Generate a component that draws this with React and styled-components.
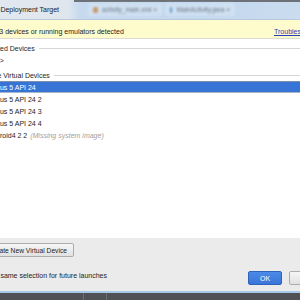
import styled, { createGlobalStyle } from "styled-components";

const Global = createGlobalStyle`
  html, body { margin: 0; padding: 0; }
  body {
    font-family: "Liberation Sans", Arial, sans-serif;
    font-size: 7px;
    color: #1e1e1e;
  }
`;

const Screen = styled.div`
  width: 300px;
  height: 300px;
  overflow: hidden;
  display: flex;
  flex-direction: column;
  background: #fff;
`;

const TitleBar = styled.div`
  height: 20px;
  display: flex;
  align-items: center;
  background: linear-gradient(to right, #e2e8ef 0, #dfe6ee 68px, #c6d9ee 80px, #c2d7ee 200px, #cadcef 300px);
  border-bottom: 1px solid #b9c9da;
  box-sizing: border-box;
  position: relative;
  white-space: nowrap;
`;

const TopShade = styled.div`
  position: absolute;
  left: 74px;
  right: 0;
  top: 0;
  height: 2px;
  background: #6d7278;
`;

const Title = styled.span`
  margin-left: ${(p) => p.$shift}px;
  width: 80px;
  flex: none;
  color: #1b1b1b;
`;

const Tabs = styled.div`
  display: flex;
  gap: 3px;
  margin-left: 29px;
  filter: blur(1.1px);
  opacity: 0.8;
`;

const Tab = styled.div`
  display: flex;
  align-items: center;
  gap: 4px;
  padding: 3px 5px;
  width: ${(p) => p.$w}px;
  box-sizing: border-box;
  border-radius: 2px;
  background: #d3e3f3;
  color: #56606c;
  font-size: 6.5px;
`;

const TabIcon = styled.span`
  width: 6px;
  height: 6px;
  border-radius: 2px;
  background: ${(p) => p.$c};
`;

const Warning = styled.div`
  height: 19px;
  display: flex;
  align-items: center;
  justify-content: space-between;
  background: #fefbcc;
  border-bottom: 1px solid #dcdcd0;
  box-sizing: border-box;
  white-space: nowrap;
  overflow: hidden;
  padding-top: 5px;
`;

const Clip = styled.span`
  margin-left: ${(p) => p.$shift}px;
  white-space: nowrap;
`;

const Link = styled.a`
  color: #2a3fb8;
  text-decoration: underline;
  margin-right: -20px;
  width: 46px;
`;

const List = styled.div`
  flex: 1;
  padding-top: 3px;
  display: flex;
  flex-direction: column;
`;

const GroupHeader = styled.div`
  height: 12px;
  display: flex;
  align-items: center;
  gap: 4px;
  margin-top: ${(p) => p.$top || 0}px;
  white-space: nowrap;
  &::after {
    content: "";
    flex: 1;
    height: 1px;
    background: #d6d6d6;
  }
`;

const Row = styled.div`
  height: 12px;
  display: flex;
  align-items: center;
  white-space: nowrap;
  box-sizing: border-box;
  background: ${(p) => (p.$selected ? "#3874d6" : "transparent")};
  color: ${(p) => (p.$selected ? "#fff" : "#1e1e1e")};
  border-top: 1px solid ${(p) => (p.$selected ? "#7f8fa8" : "transparent")};
  border-bottom: 1px solid ${(p) => (p.$selected ? "#a7b5c8" : "transparent")};
`;

const Note = styled.i`
  color: #a0a0a0;
  margin-left: 3px;
`;

const Footer = styled.div`
  height: 53px;
  background: #ebebeb;
  display: flex;
  flex-direction: column;
  padding-top: 5px;
  box-sizing: border-box;
`;

const Button = styled.button`
  font: inherit;
  height: 14px;
  padding: 0 6px;
  border-radius: 2px;
  border: 1px solid ${(p) => (p.$primary ? "#2f62b8" : "#acacac")};
  background: ${(p) =>
    p.$primary
      ? "linear-gradient(#4b8ae6, #3a76d8)"
      : "linear-gradient(#f6f6f6, #e1e1e1)"};
  color: ${(p) => (p.$primary ? "#fff" : "#1e1e1e")};
  width: ${(p) => p.$w}px;
  flex: none;
  white-space: nowrap;
  overflow: hidden;
  display: flex;
  align-items: center;
  justify-content: center;
`;

const CreateButton = styled(Button)`
  margin-left: -20px;
  justify-content: flex-end;
  padding-right: 6px;
  font-size: 6.7px;
`;

const Bottom = styled.div`
  display: flex;
  align-items: center;
  margin-top: 14px;
  margin-right: -33px;
  gap: 7px;
`;

const Remember = styled.span`
  flex: 1;
  white-space: nowrap;
  margin-top: -6px;
  margin-left: -14px;
`;

const Taskbar = styled.div`
  height: 9px;
  border-top: 2px solid #a9c9ea;
  background: #4f5154;
  display: flex;
  box-sizing: border-box;
`;

const TaskCell = styled.div`
  width: ${(p) => p.$w}px;
  border-right: 1px solid #6a6d71;
  flex: none;
`;

export default function App() {
  return (
    <Screen>
      <Global />
      <TitleBar>
        <TopShade />
        <Title $shift={-21}>Select Deployment Target</Title>
        <Tabs>
          <Tab $w={74}>
            <TabIcon $c="#c98a4a" />
            activity_main.xml ×
          </Tab>
          <Tab $w={70}>
            <TabIcon $c="#4a8ac9" />
            MainActivity.java ×
          </Tab>
        </Tabs>
      </TitleBar>
      <Warning>
        <Clip $shift={-22.5}>Found 3 devices or running emulators detected</Clip>
        <Link>Troubleshoot</Link>
      </Warning>
      <List>
        <GroupHeader>
          <Clip $shift={-26}>Connected Devices</Clip>
        </GroupHeader>
        <Row>
          <Clip $shift={-20}>&lt;none&gt;</Clip>
        </Row>
        <GroupHeader $top={3}>
          <Clip $shift={-27}>Available Virtual Devices</Clip>
        </GroupHeader>
        <Row $selected>
          <Clip $shift={-12.5}>Nexus 5 API 24</Clip>
        </Row>
        <Row>
          <Clip $shift={-12.5}>Nexus 5 API 24 2</Clip>
        </Row>
        <Row>
          <Clip $shift={-12.5}>Nexus 5 API 24 3</Clip>
        </Row>
        <Row>
          <Clip $shift={-12.5}>Nexus 5 API 24 4</Clip>
        </Row>
        <Row>
          <Clip $shift={-12.5}>Android4 2 2</Clip>
          <Note>(Missing system image)</Note>
        </Row>
      </List>
      <Footer>
        <CreateButton $w={94}>Create New Virtual Device</CreateButton>
        <Bottom>
          <Remember>Use same selection for future launches</Remember>
          <Button $primary $w={34}>OK</Button>
          <Button $w={44}>Cancel</Button>
        </Bottom>
      </Footer>
      <Taskbar>
        <TaskCell $w={83} />
        <TaskCell $w={22} />
      </Taskbar>
    </Screen>
  );
}
